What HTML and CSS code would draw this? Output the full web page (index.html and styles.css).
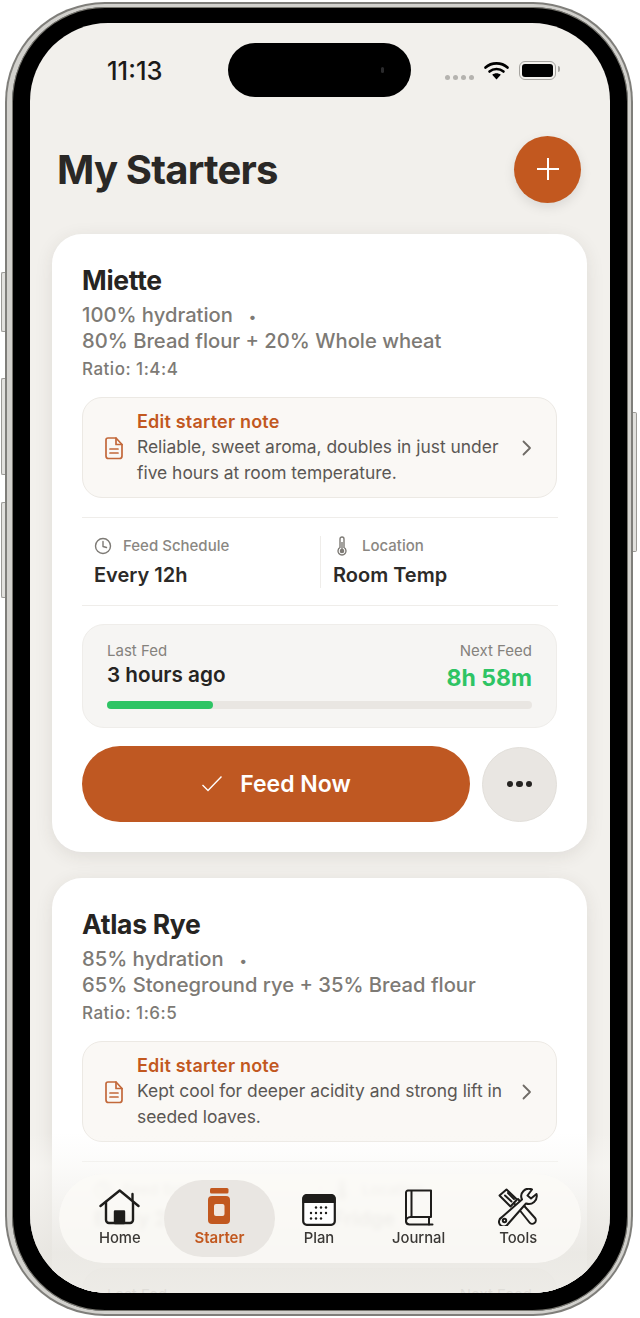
FILE: index.html
```html
<!DOCTYPE html>
<html lang="en">
<head>
  <meta charset="UTF-8" />
  <meta name="viewport" content="width=device-width, initial-scale=1.0"/>
  <title>My Starters</title>
  <link rel="stylesheet" href="styles.css">
</head>
<body>

  <div class="phone">
    <span class="side-btn btn-silent"></span>
    <span class="side-btn btn-up"></span>
    <span class="side-btn btn-down"></span>
    <span class="side-btn btn-power"></span>

    <div class="bezel">
      <div class="screen">
        <div class="island"><span class="island-cam"></span></div>

        <div class="status">
          <span class="time">11:13</span>
          <div class="status-icons">
            <span class="signal"><i></i><i></i><i></i><i></i></span>
            <svg class="wifi" width="25" height="19" viewBox="0 0 25 19">
              <path d="M1.5 6.5C7.5 1 17.5 1 23.5 6.5" fill="none" stroke="#000" stroke-width="2.6" stroke-linecap="round"/>
              <path d="M5.5 10.5C9.5 7.2 15.5 7.2 19.5 10.5" fill="none" stroke="#000" stroke-width="2.6" stroke-linecap="round"/>
              <path d="M12.5 18.5L8.2 13.8C10.8 11.8 14.2 11.8 16.8 13.8Z" fill="#000"/>
            </svg>
            <span class="battery"><span class="battery-fill"></span></span>
          </div>
        </div>

        <header class="top">
          <h1>My Starters</h1>
          <button class="add-btn">
            <svg width="24" height="24" viewBox="0 0 24 24"><path d="M12 1V23M1 12H23" stroke="#fff" stroke-width="2" fill="none"/></svg>
          </button>
        </header>

        <div class="card">
          <h2>Miette</h2>
          <p class="recipe">100% hydration &nbsp;<span class="dot">•</span><br>80% Bread flour + 20% Whole wheat</p>
          <p class="ratio">Ratio: 1:4:4</p>

          <div class="note">
            <svg class="note-icon" width="20" height="24" viewBox="0 0 20 24" fill="none" stroke="#c2683a" stroke-width="1.7" stroke-linejoin="round" stroke-linecap="round">
              <path d="M4 2H12L18 8.5V20A2.5 2.5 0 0 1 15.5 22.5H4.500A2.500 2.500 0 0 1 2 20V4A2 2 0 0 1 4 2Z"/>
              <path d="M12 2V8.500H18"/>
              <path d="M6 13H14M6 17H14"/>
            </svg>
            <div class="note-text">
              <div class="note-title">Edit starter note</div>
              <div class="note-body">Reliable, sweet aroma, doubles in just under five hours at room temperature.</div>
            </div>
            <svg class="chevron" width="10" height="16" viewBox="0 0 10 16"><path d="M1.500 1.500L8 8L1.500 14.500" fill="none" stroke="#6f6b66" stroke-width="1.800" stroke-linecap="round" stroke-linejoin="round"/></svg>
          </div>

          <div class="info-row">
            <div class="info">
              <div class="info-label">
                <svg width="18" height="18" viewBox="0 0 18 18" fill="none" stroke="#7d7a75" stroke-width="1.400" stroke-linecap="round" stroke-linejoin="round"><circle cx="9" cy="9" r="7.500"/><path d="M9 4.500V9.500L12.500 10.500"/></svg>
                Feed Schedule
              </div>
              <div class="info-value">Every 12h</div>
            </div>
            <div class="info info-right">
              <div class="info-label">
                <svg width="18" height="20" viewBox="0 0 18 20" fill="none" stroke="#7d7a75" stroke-width="1.400"><path d="M7 3A2 2 0 0 1 11 3V11.500A4 4 0 1 1 7 11.500Z"/><circle cx="9" cy="15" r="1.600" fill="#7d7a75"/><path d="M9 6V14"/></svg>
                Location
              </div>
              <div class="info-value">Room Temp</div>
            </div>
          </div>

          <div class="feed-box">
            <div class="feed-head">
              <div>
                <div class="feed-label">Last Fed</div>
                <div class="feed-value">3 hours ago</div>
              </div>
              <div class="feed-end">
                <div class="feed-label">Next Feed</div>
                <div class="feed-next">8h 58m</div>
              </div>
            </div>
            <div class="track"><div class="track-fill" style="width: 25%"></div></div>
          </div>

          <div class="actions">
            <button class="feed-btn">
              <svg width="22" height="18" viewBox="0 0 22 18"><path d="M1.500 10L7 15.500L20.500 1.500" fill="none" stroke="#fff" stroke-width="1.400"/></svg>
              Feed Now
            </button>
            <button class="more-btn"><i></i><i></i><i></i></button>
          </div>
        </div>

        <div class="card">
          <h2>Atlas Rye</h2>
          <p class="recipe">85% hydration &nbsp;<span class="dot">•</span><br>65% Stoneground rye + 35% Bread flour</p>
          <p class="ratio">Ratio: 1:6:5</p>

          <div class="note">
            <svg class="note-icon" width="20" height="24" viewBox="0 0 20 24" fill="none" stroke="#c2683a" stroke-width="1.7" stroke-linejoin="round" stroke-linecap="round">
              <path d="M4 2H12L18 8.5V20A2.5 2.5 0 0 1 15.5 22.5H4.500A2.500 2.500 0 0 1 2 20V4A2 2 0 0 1 4 2Z"/>
              <path d="M12 2V8.500H18"/>
              <path d="M6 13H14M6 17H14"/>
            </svg>
            <div class="note-text">
              <div class="note-title">Edit starter note</div>
              <div class="note-body">Kept cool for deeper acidity and strong lift in seeded loaves.</div>
            </div>
            <svg class="chevron" width="10" height="16" viewBox="0 0 10 16"><path d="M1.500 1.500L8 8L1.500 14.500" fill="none" stroke="#6f6b66" stroke-width="1.800" stroke-linecap="round" stroke-linejoin="round"/></svg>
          </div>

          <div class="info-row">
            <div class="info">
              <div class="info-label">
                <svg width="18" height="18" viewBox="0 0 18 18" fill="none" stroke="#7d7a75" stroke-width="1.400" stroke-linecap="round" stroke-linejoin="round"><circle cx="9" cy="9" r="7.500"/><path d="M9 4.500V9.500L12.500 10.500"/></svg>
                Feed Schedule
              </div>
              <div class="info-value">Every 24h</div>
            </div>
            <div class="info info-right">
              <div class="info-label">
                <svg width="18" height="20" viewBox="0 0 18 20" fill="none" stroke="#7d7a75" stroke-width="1.400"><path d="M7 3A2 2 0 0 1 11 3V11.500A4 4 0 1 1 7 11.500Z"/><circle cx="9" cy="15" r="1.600" fill="#7d7a75"/><path d="M9 6V14"/></svg>
                Location
              </div>
              <div class="info-value">Fridge</div>
            </div>
          </div>

          <div class="feed-box">
            <div class="feed-head">
              <div>
                <div class="feed-label">Last Fed</div>
              </div>
              <div class="feed-end">
                <div class="feed-label">Next Feed</div>
              </div>
            </div>
          </div>
        </div>

        <div class="fade"></div>

        <nav class="tabs">
          <a class="tab">
            <svg width="42" height="37" viewBox="0 0 42 37" fill="none" stroke="#1e1d1b" stroke-width="2.400" stroke-linejoin="round" stroke-linecap="round">
              <path d="M1.500 17L20.700 1.500L39.500 17"/>
              <path d="M33.500 11V5"/>
              <path d="M7 13V31A3 3 0 0 0 10 34H31A3 3 0 0 0 34 31V13"/>
              <rect x="16" y="22.500" width="9" height="11.500" fill="#1e1d1b"/>
            </svg>
            <span>Home</span>
          </a>
          <a class="tab tab-active">
            <svg width="24" height="37" viewBox="0 0 24 37">
              <rect x="3" y="0" width="18.500" height="5.500" rx="1.500" fill="#c2581f"/>
              <path d="M5 8H19A4 4 0 0 1 23 12V32A4 4 0 0 1 19 36H5A4 4 0 0 1 1 32V12A4 4 0 0 1 5 8Z" fill="#c2581f"/>
              <rect x="7" y="16" width="10.500" height="12" rx="2" fill="#f0e6df"/>
            </svg>
            <span>Starter</span>
          </a>
          <a class="tab">
            <svg width="34" height="32" viewBox="0 0 34 32">
              <rect x="1.200" y="1.200" width="31.600" height="29.600" rx="3.500" fill="#fff" stroke="#1e1d1b" stroke-width="2.200"/>
              <path d="M4.500 0.500H29.500A4 4 0 0 1 33.500 4.500V9H0.500V4.500A4 4 0 0 1 4.500 0.500Z" fill="#1e1d1b"/>
              <g fill="#1e1d1b">
                <circle cx="14" cy="13.500" r="1.200"/><circle cx="19" cy="13.500" r="1.200"/><circle cx="24" cy="13.500" r="1.200"/>
                <circle cx="9" cy="19" r="1.200"/><circle cx="14" cy="19" r="1.200"/><circle cx="19" cy="19" r="1.200"/><circle cx="24" cy="19" r="1.200"/>
                <circle cx="9" cy="24.500" r="1.200"/><circle cx="14" cy="24.500" r="1.200"/><circle cx="19" cy="24.500" r="1.200"/>
              </g>
            </svg>
            <span>Plan</span>
          </a>
          <a class="tab">
            <svg width="30" height="37" viewBox="0 0 30 37" fill="none" stroke="#1e1d1b" stroke-width="2" stroke-linejoin="round" stroke-linecap="round">
              <path d="M4 1.500H27V28H6.500A4.500 4.500 0 0 0 2 32.500V3.500A2 2 0 0 1 4 1.500Z"/>
              <path d="M2 32.500A3.500 3.500 0 0 0 5.500 35.500H28.500"/>
              <path d="M25 28V35.500"/>
              <path d="M7.500 2V28"/>
            </svg>
            <span>Journal</span>
          </a>
          <a class="tab">
            <svg width="40" height="38" viewBox="0 0 40 38" fill="none" stroke="#1e1d1b" stroke-width="2" stroke-linejoin="round" stroke-linecap="round">
              <path d="M1.500 7.500L8.500 1.500L19 11.500L12.500 18.500Z"/>
              <path d="M7 7.500L13.500 13.500M10 5L16 11"/>
              <path d="M16 15L31.500 34.500A3.500 3.500 0 0 0 37 30L20 11"/>
              <path fill="#f9f8f5" d="M34 1.500A7.500 7.500 0 0 0 24 11.500L3.500 29.500A4.800 4.800 0 1 0 10 36L28 15.500A8 8 0 0 0 38.500 6L33 10.500L29.500 7.500Z"/>
              <circle cx="6.500" cy="32.500" r="1.700"/>
            </svg>
            <span>Tools</span>
          </a>
        </nav>
      </div>
    </div>
  </div>

</body>
</html>
```

FILE: styles.css
```css
* {
  box-sizing: border-box;
}
html, body {
  margin: 0;
  height: 100%;
}
body {
  background: #fff;
  font-family: Inter, 'Liberation Sans', sans-serif;
  color: #262422;
  overflow: hidden;
}
button {
  font-family: inherit;
  border: none;
  padding: 0;
}

/* phone frame */
.phone {
  position: relative;
  width: 628px;
  height: 1314px;
  margin: 2px 0 0 5px;
  border-radius: 100px;
  padding: 2px;
  background: #7f7e7a;
}
.bezel {
  height: 100%;
  border: 3px solid #d2d1cd;
  border-left-width: 5px;
  border-radius: 98px;
  background: #000;
  box-shadow: inset 0 0 0 1px #77766f;
  padding: 16px 18px 18px 18px;
}
.side-btn {
  position: absolute;
  width: 4px;
  background: #e2e1de;
  border: 1px solid #9c9b97;
  border-right: none;
  border-radius: 2px 0 0 2px;
  left: -4px;
}
.btn-silent { top: 270px; height: 60px; }
.btn-up { top: 376px; height: 97px; }
.btn-down { top: 500px; height: 96px; }
.btn-power { top: 410px; height: 140px; left: auto; right: -4px; border-radius: 0 2px 2px 0; border-right: 1px solid #9c9b97; border-left: none; }

.screen {
  position: relative;
  height: 100%;
  border-radius: 78px;
  overflow: hidden;
  background: #f2f0ec;
  padding: 0 24px;
}
.island {
  position: absolute;
  left: 198px;
  top: 20px;
  width: 183px;
  height: 54px;
  border-radius: 27px;
  background: #000;
}
.island-cam {
  position: absolute;
  right: 27px;
  top: 24px;
  width: 3px;
  height: 6px;
  background: #2a2a2c;
  border-radius: 2px;
}

/* status bar */
.status {
  display: flex;
  justify-content: space-between;
  align-items: center;
  height: 74px;
  padding: 21px 30px 0 53px;
}
.time {
  font-size: 25.500px;
  font-weight: 500;
  color: #1b1a19;
}
.status-icons {
  display: flex;
  align-items: center;
  gap: 10px;
}
.signal {
  display: flex;
  gap: 3px;
  margin-top: 14px;
}
.signal i {
  width: 5px;
  height: 5px;
  border-radius: 50%;
  background: #b5b3af;
}
.battery {
  position: relative;
  width: 37px;
  height: 19px;
  border: 1.500px solid #a6a4a0;
  border-radius: 6px;
  padding: 2px;
}
.battery::after {
  content: '';
  position: absolute;
  right: -5px;
  top: 4px;
  width: 2px;
  height: 6px;
  background: #a6a4a0;
  border-radius: 0 2px 2px 0;
}
.battery-fill {
  display: block;
  height: 100%;
  background: #000;
  border-radius: 3px;
}

/* title */
.top {
  display: flex;
  justify-content: space-between;
  align-items: center;
  height: 68px;
  margin-top: 38px;
  padding-left: 3px;
  margin-right: 5px;
}
h1 {
  margin: 0;
  font-size: 40px;
  font-weight: 700;
  letter-spacing: -0.8px;
  color: #2a2826;
}
.add-btn {
  width: 67px;
  height: 67px;
  border-radius: 50%;
  background: #c2581f;
  box-shadow: 0 4px 12px rgba(0, 0, 0, 0.1);
  display: flex;
  align-items: center;
  justify-content: center;
}

/* cards */
.card {
  width: 535px;
  background: #fff;
  border-radius: 30px;
  margin: 31px 0 26px -2px;
  padding: 30px 30px 30px;
  box-shadow: 0 4px 18px rgba(60, 50, 40, 0.1);
}
.card + .card {
  margin-top: 0;
}
h2 {
  margin: 0;
  font-size: 26.500px;
  line-height: 32px;
  font-weight: 700;
  letter-spacing: -0.3px;
  color: #262422;
}
.recipe {
  margin: 6px 0 0;
  font-size: 20.200px;
  line-height: 26px;
  font-weight: 500;
  color: #7d7a75;
}
.dot {
  font-size: 14px;
  line-height: 1;
  margin-left: 5px;
}
.ratio {
  margin: 3px 0 0;
  font-size: 17px;
  line-height: 24px;
  font-weight: 500;
  letter-spacing: 0.5px;
  color: #7d7a75;
}

/* note */
.note {
  display: flex;
  align-items: center;
  margin-top: 16px;
  width: 475px;
  height: 101px;
  padding: 0 24px 0 21px;
  background: #faf8f5;
  border: 1.500px solid #ece9e4;
  border-radius: 20px;
}
.note-text {
  flex: 1;
  margin-left: 13px;
}
.note-title {
  font-size: 18px;
  line-height: 25px;
  font-weight: 600;
  letter-spacing: 0.2px;
  color: #c2581f;
}
.note-body {
  font-size: 17.400px;
  line-height: 26px;
  color: #5a5754;
}

/* feed schedule & location */
.info-row {
  display: flex;
  margin-top: 19px;
  width: 476px;
  height: 89px;
  border-top: 1.500px solid #efedea;
  border-bottom: 1.500px solid #efedea;
  align-items: center;
}
.info {
  flex: 0 0 238px;
  padding-left: 12px;
}
.info-right {
  border-left: 1.500px solid #efedea;
}
.info-label {
  display: flex;
  align-items: center;
  gap: 11px;
  font-size: 15px;
  font-weight: 500;
  color: #8a8782;
  height: 20px;
}
.info-value {
  margin-top: 6px;
  font-size: 20px;
  line-height: 26px;
  font-weight: 600;
  color: #2c2a28;
}

/* last fed box */
.feed-box {
  margin-top: 18px;
  width: 475px;
  height: 104px;
  padding: 17px 24px 0 24px;
  background: #f6f5f3;
  border: 1.500px solid #efedea;
  border-radius: 22px;
}
.feed-head {
  display: flex;
  justify-content: space-between;
}
.feed-end {
  text-align: right;
}
.feed-label {
  font-size: 15px;
  line-height: 18px;
  color: #85827d;
}
.feed-value {
  margin-top: 2px;
  font-size: 20.700px;
  line-height: 26px;
  font-weight: 600;
  color: #262422;
}
.feed-next {
  margin-top: 4px;
  font-size: 23px;
  line-height: 28px;
  font-weight: 700;
  color: #2ec464;
}
.track {
  margin-top: 9px;
  height: 8px;
  border-radius: 4px;
  background: #e9e6e2;
}
.track-fill {
  height: 100%;
  border-radius: 4px;
  background: #2ec464;
}

/* buttons */
.actions {
  display: flex;
  align-items: center;
  gap: 12px;
  margin-top: 18px;
}
.feed-btn {
  flex: 0 0 388px;
  height: 76px;
  border-radius: 38px;
  background: #bf5822;
  color: #fff;
  font-size: 23px;
  font-weight: 600;
  display: flex;
  align-items: center;
  justify-content: center;
  gap: 17px;
}
.more-btn {
  width: 75px;
  height: 75px;
  border-radius: 50%;
  background: #e9e6e2;
  border: 1.500px solid #e2dfda;
  display: flex;
  align-items: center;
  justify-content: center;
  gap: 3px;
}
.more-btn i {
  width: 6.500px;
  height: 6.500px;
  border-radius: 50%;
  background: #262422;
}

/* bottom tabs */
.fade {
  position: absolute;
  left: 0;
  right: 0;
  bottom: 0;
  height: 160px;
  background: linear-gradient(to bottom, rgba(250, 249, 246, 0), rgba(248, 247, 244, 0.55) 21%, rgba(232, 230, 225, 0.88) 75%, rgba(236, 234, 229, 0.88) 100%);
}
.tabs {
  position: absolute;
  left: 29px;
  bottom: 30px;
  width: 522px;
  height: 89px;
  border-radius: 45px;
  background: rgba(251, 250, 247, 0.82);
  backdrop-filter: blur(2.500px);
  display: flex;
  padding: 6px 13px 6px 11px;
}
.tab {
  flex: 0 0 99.600px;
  display: flex;
  flex-direction: column;
  align-items: center;
  justify-content: flex-end;
  gap: 3px;
  padding-bottom: 10px;
  font-size: 14.800px;
  font-weight: 500;
  color: #3a3835;
  border-radius: 40px;
}
.tab-active {
  flex: 0 0 111px;
  margin: 0 -5.700px;
  background: #e9e6e2;
  color: #c2581f;
  font-size: 15px;
  font-weight: 600;
}
```
